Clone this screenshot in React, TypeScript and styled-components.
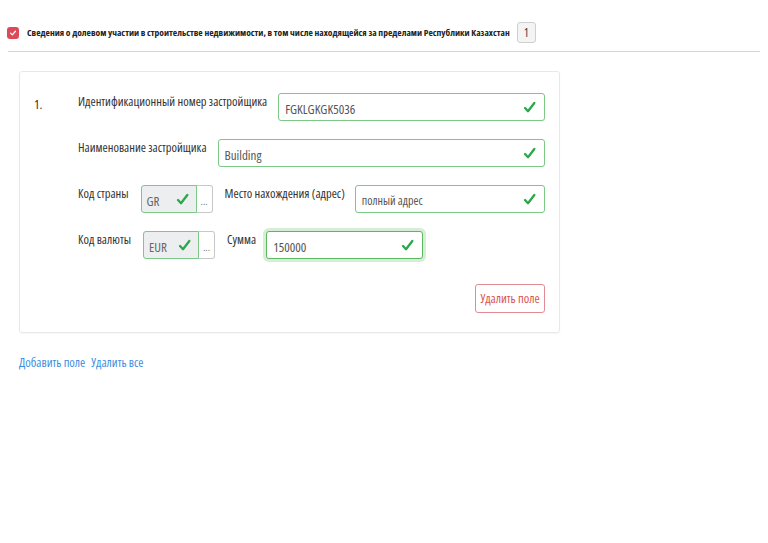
import React from 'react';
import styled, { createGlobalStyle } from 'styled-components';

const GlobalStyle = createGlobalStyle`
  body {
    margin: 0;
    background: #fff;
    font-family: 'Open Sans', sans-serif;
    font-stretch: 75%;
    color: #333;
  }
`;

const Page = styled.div`
  padding: 22px 8px 0 8px;
`;

const Header = styled.div`
  display: flex;
  align-items: center;
  gap: 8px;
  padding-bottom: 8px;
  border-bottom: 1px solid #c9d8e2;
`;

const CheckBox = styled.span`
  width: 12px;
  height: 12px;
  margin-left: -1px;
  border-radius: 3px;
  background: #dc4a5a;
  display: flex;
  align-items: center;
  justify-content: center;
  flex: none;
`;

const Title = styled.span`
  font-size: 9.5px;
  font-weight: bold;
  color: #222;
`;

const Badge = styled.span`
  display: inline-flex;
  align-items: center;
  justify-content: center;
  width: 17px;
  height: 19px;
  border: 1px solid #cfcfcf;
  border-radius: 3px;
  background: #f4f4f4;
  font-size: 12px;
  color: #444;
  margin-left: -1px;
`;

const Content = styled.div`
  padding: 19px 11px 0 11px;
`;

const Card = styled.div`
  width: 541px;
  box-sizing: border-box;
  border: 1px solid #e8e8e8;
  border-radius: 3px;
  box-shadow: 0 1px 2px rgba(0, 0, 0, 0.04);
  padding: 21px 14px 19px 14px;
  display: flex;
`;

const Number = styled.div`
  width: 44px;
  flex: none;
  font-size: 13px;
  padding-top: 2px;
  color: #333;
`;

const Fields = styled.div`
  flex: 1;
  display: flex;
  flex-direction: column;
  gap: 18px;
`;

const Row = styled.div`
  display: flex;
  align-items: flex-start;
`;

const Label = styled.label<{ $gap?: number; $lead?: number }>`
  font-size: 12.5px;
  color: #333;
  margin-left: ${p => p.$lead ?? 0}px;
  margin-right: ${p => p.$gap ?? 11}px;
  white-space: nowrap;
`;

const InputBox = styled.div<{ $focus?: boolean; $width?: number }>`
  height: 28px;
  box-sizing: border-box;
  ${p => (p.$width ? `width: ${p.$width}px; flex: none;` : 'flex: 1;')}
  border: 1px solid ${p => (p.$focus ? '#5cb85c' : '#7cc886')};
  border-radius: 3px;
  background: #fff;
  display: flex;
  align-items: center;
  padding: 0 8px 0 6px;
  font-size: 13px;
  color: #555;
  box-shadow: ${p => (p.$focus ? '0 0 0 3px rgba(92, 184, 92, 0.25)' : 'none')};
`;

const Value = styled.span<{ $small?: boolean }>`
  flex: 1;
  padding-top: 3px;
  white-space: nowrap;
  font-size: ${p => (p.$small ? 12 : 13)}px;
`;

const Group = styled.div`
  display: flex;
  width: 72px;
  height: 28px;
  flex: none;
`;

const GroupInput = styled.div`
  width: 56px;
  box-sizing: border-box;
  border: 1px solid #7cc886;
  border-radius: 3px 0 0 3px;
  background: #eceeef;
  display: flex;
  align-items: center;
  padding: 0 7px 0 5px;
  font-size: 13px;
  color: #666;
`;

const Addon = styled.button`
  width: 16px;
  box-sizing: border-box;
  border: 1px solid #c8c8c8;
  border-left: none;
  border-radius: 0 3px 3px 0;
  background: #fff;
  padding: 0;
  font-size: 9px;
  color: #666;
  font-family: inherit;
  display: flex;
  align-items: center;
  justify-content: center;
  padding-top: 4px;
`;

const Actions = styled.div`
  display: flex;
  justify-content: flex-end;
  margin-top: 7px;
`;

const DangerButton = styled.button`
  height: 29px;
  width: 70px;
  border: 1px solid #e38b92;
  border-radius: 3px;
  background: #fff;
  color: #d9534f;
  font-family: inherit;
  font-stretch: inherit;
  font-size: 12.5px;
  padding: 0;
  white-space: nowrap;
`;

const Links = styled.div`
  display: flex;
  gap: 6px;
  margin-top: 21px;
`;

const LinkText = styled.a`
  font-size: 12.5px;
  color: #3d8ee0;
  text-decoration: none;
`;

const Check = ({ size = 13 }: { size?: number }) => (
  <svg width={size} height={size} viewBox="0 0 14 14">
    <path d="M2.2 7.6 L5.4 11 L12.2 2.2" fill="none" stroke="#2aa84a" strokeWidth="2.5" strokeLinecap="round" strokeLinejoin="round" />
  </svg>
);

const BoxCheck = () => (
  <svg width="8" height="8" viewBox="0 0 10 10">
    <path d="M2 5.2 L4.2 7.3 L8 2.8" fill="none" stroke="#fff" strokeWidth="1.6" strokeLinecap="round" strokeLinejoin="round" />
  </svg>
);

export default function App() {
  return (
    <>
      <GlobalStyle />
      <Page>
        <Header>
          <CheckBox>
            <BoxCheck />
          </CheckBox>
          <Title>
            Сведения о долевом участии в строительстве недвижимости, в том числе находящейся за пределами Республики Казахстан
          </Title>
          <Badge>1</Badge>
        </Header>
        <Content>
          <Card>
            <Number>1.</Number>
            <Fields>
              <Row>
                <Label>Идентификационный номер застройщика</Label>
                <InputBox>
                  <Value>FGKLGKGK5036</Value>
                  <Check />
                </InputBox>
              </Row>
              <Row>
                <Label>Наименование застройщика</Label>
                <InputBox>
                  <Value>Building</Value>
                  <Check />
                </InputBox>
              </Row>
              <Row>
                <Label $gap={12}>Код страны</Label>
                <Group>
                  <GroupInput>
                    <Value>GR</Value>
                    <Check />
                  </GroupInput>
                  <Addon>...</Addon>
                </Group>
                <Label $lead={12} $gap={10}>Место нахождения (адрес)</Label>
                <InputBox>
                  <Value $small>полный адрес</Value>
                  <Check />
                </InputBox>
              </Row>
              <Row>
                <Label $gap={12}>Код валюты</Label>
                <Group>
                  <GroupInput>
                    <Value>EUR</Value>
                    <Check />
                  </GroupInput>
                  <Addon>...</Addon>
                </Group>
                <Label $lead={12} $gap={10}>Сумма</Label>
                <InputBox $focus $width={157}>
                  <Value>150000</Value>
                  <Check />
                </InputBox>
              </Row>
              <Actions>
                <DangerButton>Удалить поле</DangerButton>
              </Actions>
            </Fields>
          </Card>
          <Links>
            <LinkText href="#">Добавить поле</LinkText>
            <LinkText href="#">Удалить все</LinkText>
          </Links>
        </Content>
      </Page>
    </>
  );
}
